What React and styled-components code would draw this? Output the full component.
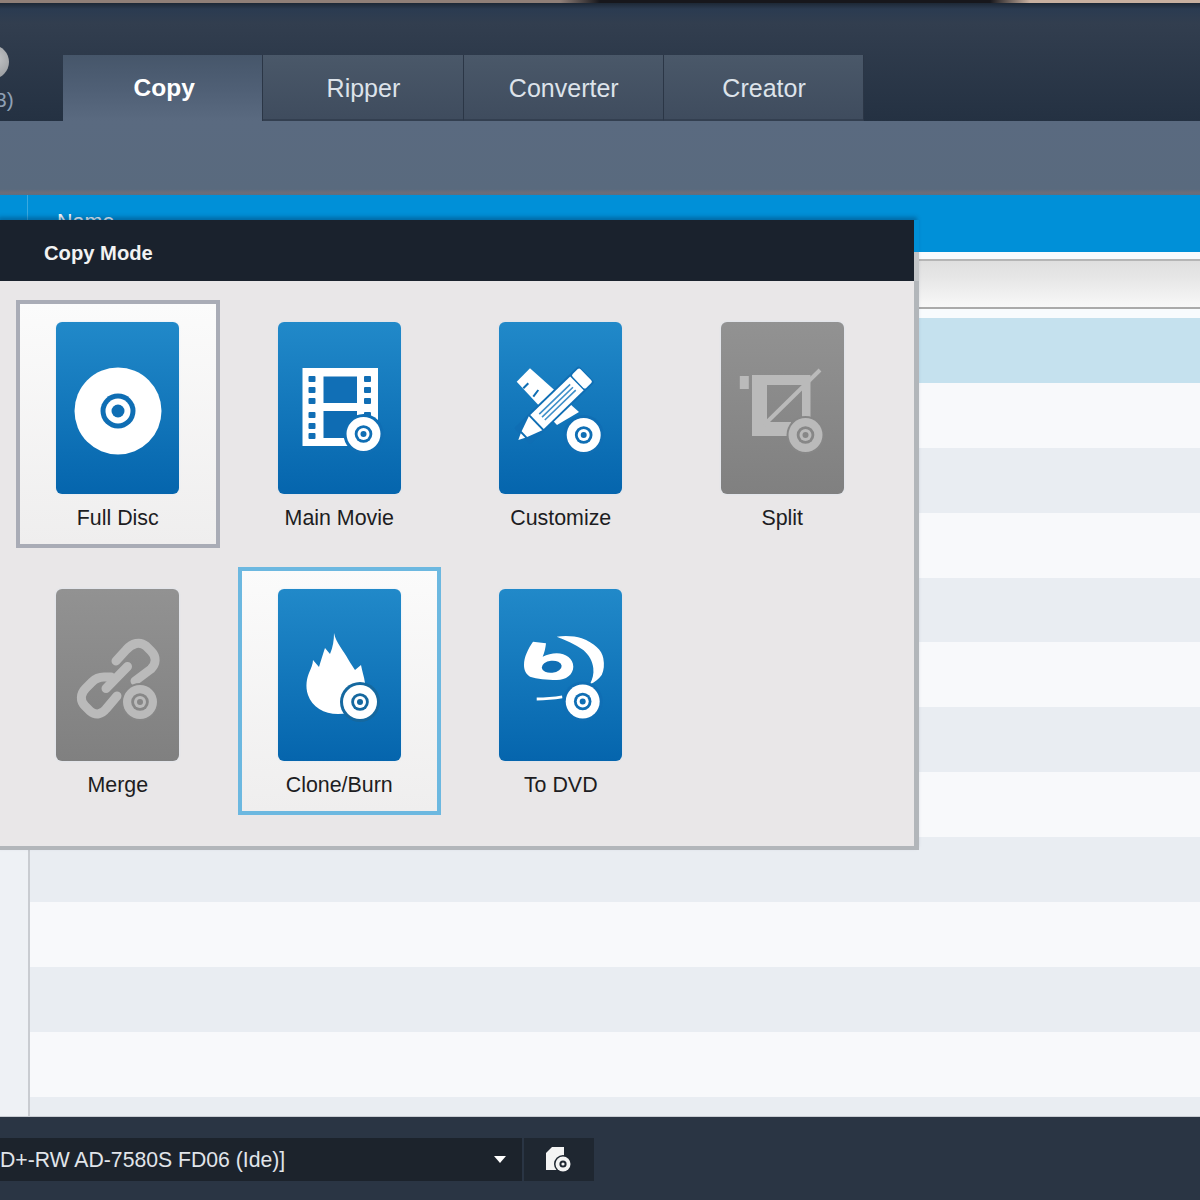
import React from 'react';
import styled, { createGlobalStyle } from 'styled-components';

const GlobalStyle = createGlobalStyle`
  html, body {
    margin: 0;
    padding: 0;
    background: #fff;
    font-family: "Liberation Sans", Arial, sans-serif;
  }
`;

const Page = styled.div`
  position: relative;
  width: 1200px;
  height: 1200px;
  overflow: hidden;
  display: flex;
  flex-direction: column;
`;

const TopStrip = styled.div`
  height: 3px;
  flex: none;
  background: linear-gradient(90deg, #8f7f78 0, #8f7f78 560px, #17171c 600px, #17171c 990px, #c8b0a0 1030px, #c8b0a0 100%);
`;

const Header = styled.header`
  position: relative;
  height: 118px;
  flex: none;
  box-sizing: border-box;
  padding: 52px 0 0 63px;
  background: linear-gradient(180deg, #1d2836 0, #2b3b51 6px, #323e4f 20px, #243142 100%);
`;

const LogoBall = styled.div`
  position: absolute;
  left: -25px;
  top: 42px;
  width: 34px;
  height: 34px;
  border-radius: 50%;
  background: radial-gradient(circle at 60% 40%, #c4c6c8, #8a8d91 95%);
`;

const LogoText = styled.div`
  position: absolute;
  left: -12px;
  top: 85px;
  font-size: 21px;
  color: #8fa0b4;
`;

const Tabs = styled.nav`
  display: flex;
`;

const Tab = styled.div`
  width: 200.3px;
  height: 66px;
  box-sizing: border-box;
  display: flex;
  align-items: center;
  justify-content: center;
  padding: ${p => (p.$active ? '0 0 0 3px' : '2px 0 0 1px')};
  font-size: ${p => (p.$active ? '24.5px' : '25px')};
  font-weight: ${p => (p.$active ? 700 : 400)};
  color: ${p => (p.$active ? '#fff' : '#dde3ea')};
  background: ${p => (p.$active
    ? 'linear-gradient(180deg, #46566a 0, #4f5f75 50%, #5a6a80 100%)'
    : 'linear-gradient(180deg, #4a5869 0, #3f4c5e 100%)')};
  border-right: 1px solid #2b3646;
  border-bottom: ${p => (p.$active ? 'none' : '2px solid #333f50')};
`;

const SubBar = styled.div`
  height: 74px;
  flex: none;
  background: linear-gradient(180deg, #5a6a80 0, #596a7e 92%, #6d6d78 97%, #5d6f82 100%);
`;

const TableHead = styled.div`
  height: 57px;
  flex: none;
  display: flex;
  background: #0090d8;
  color: #fff;
  font-size: 21.5px;
`;

const CheckHead = styled.div`
  width: 27px;
  flex: none;
  border-right: 1px solid #3aa9e0;
`;

const NameHead = styled.div`
  padding: 15px 0 0 29px;
`;

const SortRow = styled.div`
  height: 66px;
  flex: none;
  box-sizing: border-box;
  padding: 7px 0 9px;
  background: #f8fbfd;
`;

const SortInner = styled.div`
  height: 100%;
  box-sizing: border-box;
  border-top: 2px solid #b5b5b5;
  border-bottom: 2px solid #aaa;
  background: linear-gradient(180deg, #dfdfdf 0, #e6e6e6 35%, #f8f8f8 100%);
`;

const TableBody = styled.div`
  flex: 1;
  display: flex;
  min-height: 0;
  overflow: hidden;
`;

const SideColumn = styled.div`
  width: 28px;
  flex: none;
  background: #eef1f5;
  border-right: 2px solid #c9ccd1;
`;

const Rows = styled.div`
  flex: 1;
`;

const Row = styled.div`
  height: 64.9px;
  background: ${p => (p.$selected ? '#c5e1ee' : p.$odd ? '#e9edf2' : '#f8f9fb')};
`;

const Footer = styled.footer`
  height: 84px;
  flex: none;
  box-sizing: border-box;
  display: flex;
  padding-top: 21px;
  background: #2a3544;
  border-top: 1px solid #c8ccd2;
`;

const DriveSelect = styled.div`
  width: 522px;
  height: 43px;
  box-sizing: border-box;
  display: flex;
  align-items: center;
  justify-content: space-between;
  padding-right: 16px;
  background: #1c232c;
  color: #e1e5ea;
  font-size: 21.2px;
  white-space: nowrap;
`;

const Arrow = styled.span`
  width: 0;
  height: 0;
  border-left: 6.5px solid transparent;
  border-right: 6.5px solid transparent;
  border-top: 7px solid #fff;
`;

const DriveButton = styled.div`
  width: 70px;
  height: 43px;
  margin-left: 2px;
  display: flex;
  align-items: center;
  justify-content: center;
  padding-right: 2px;
  box-sizing: border-box;
  background: #1f2731;
`;

const Dialog = styled.section`
  position: absolute;
  left: 0;
  top: 220px;
  width: 919px;
  box-shadow: -2px -3px 4px rgba(0, 40, 80, 0.35);

  &::after {
    content: '';
    position: absolute;
    right: 0;
    top: 32px;
    width: 5px;
    height: 29px;
    background: #c2c5c8;
  }
`;

const DialogTitle = styled.h2`
  margin: 0;
  width: 914px;
  height: 61px;
  box-sizing: border-box;
  padding: 5px 0 0 44px;
  display: flex;
  align-items: center;
  background: #1a222d;
  color: #f2f2f2;
  font-size: 20.2px;
  font-weight: 700;
`;

const DialogBody = styled.div`
  box-sizing: border-box;
  padding: 19px 0 31px 16px;
  display: grid;
  grid-template-columns: repeat(4, 203.5px);
  column-gap: 18px;
  row-gap: 19px;
  background: #e9e7e8;
  border-right: 5px solid #b2b6ba;
  border-bottom: 4px solid #b2b6ba;
`;

const modeBorders = { selected: '#a9acb6', hover: '#6cb8e0' };

const ModeCard = styled.div`
  height: 248px;
  box-sizing: border-box;
  padding-top: 18px;
  display: flex;
  flex-direction: column;
  align-items: center;
  border: 4px solid ${p => modeBorders[p.$state] || 'transparent'};
  background: ${p => (p.$state ? 'linear-gradient(180deg, #fbfbfb 0, #efeeee 100%)' : 'transparent')};
`;

const Tile = styled.div`
  width: 123px;
  height: 172px;
  flex: none;
  border-radius: 6px;
  background: ${p => (p.$disabled
    ? 'linear-gradient(180deg, #929292 0, #808080 100%)'
    : 'linear-gradient(180deg, #2189c9 0, #0565ad 100%)')};
  box-shadow: 0 0 2px rgba(200, 225, 245, 0.6);

  svg {
    display: block;
  }
`;

const ModeLabel = styled.div`
  margin-top: 12px;
  font-size: 21.4px;
  line-height: 24px;
  color: #1d1d22;
  white-space: nowrap;
`;

const BLUE = '#0f6eb4';
const WHITE = '#fff';
const GRAY = '#bababa';
const GRAY_BG = '#878787';

const Badge = ({ x = 85, y = 113, fg = WHITE, bg = BLUE, outline = 3 }) => (
  <g>
    <circle cx={x} cy={y} r={17 + outline} fill={bg} />
    <circle cx={x} cy={y} r="17" fill={fg} />
    <circle cx={x} cy={y} r="8.8" fill={bg} />
    <circle cx={x} cy={y} r="6" fill={fg} />
    <circle cx={x} cy={y} r="3" fill={bg} />
  </g>
);

const FullDiscIcon = () => (
  <svg width="123" height="172" viewBox="0 0 123 172">
    <circle cx="62" cy="89" r="43.5" fill={WHITE} />
    <circle cx="62" cy="89" r="17.5" fill={BLUE} />
    <circle cx="62" cy="89" r="12.5" fill={WHITE} />
    <circle cx="62" cy="89" r="6.5" fill={BLUE} />
  </svg>
);

const filmHoles = [54, 65, 76, 90, 101, 111];
const MainMovieIcon = () => (
  <svg width="123" height="172" viewBox="0 0 123 172">
    <rect x="24.5" y="46" width="75.5" height="78" fill={WHITE} />
    <rect x="45.5" y="54.5" width="33.5" height="26.5" fill="#116fb6" />
    <rect x="45.5" y="89" width="33.5" height="27" fill="#0f6cb3" />
    {filmHoles.map(y => <rect key={y} x="30.5" y={y} width="7" height="6" rx="1" fill="#106eb5" />)}
    {filmHoles.map(y => <rect key={y} x="86" y={y} width="7" height="6" rx="1" fill="#106eb5" />)}
    <Badge x={85.5} y={112} />
  </svg>
);

const CustomizeIcon = () => (
  <svg width="123" height="172" viewBox="0 0 123 172">
    <path d="M17.7 59.7 L31 46.3 L80 90 L58 103 Z" fill={WHITE} />
    <path d="M24.3 66.3 L29.3 61.3 M34.3 74.7 L39.3 68" stroke={BLUE} strokeWidth="2" fill="none" />
    <g transform="translate(19.3 118) rotate(-44)">
      <rect x="5" y="-11.5" width="90" height="23" rx="2" fill={BLUE} />
      <path d="M0 0 L6.5 -3.2 L6.5 3.2 Z" fill={WHITE} />
      <path d="M8.5 -4 L24 -9.7 L24 9.7 L8.5 4 Z" fill={WHITE} />
      <rect x="26" y="-9.7" width="55.5" height="19.4" fill={WHITE} />
      <rect x="83" y="-9.7" width="11" height="19.4" rx="2" fill={WHITE} />
      <path d="M33 -4 H76 M33 0 H76 M33 4 H76" stroke="#3f8fc9" strokeWidth="1.6" fill="none" />
    </g>
    <Badge x={84.7} y={113} />
  </svg>
);

const SplitIcon = () => (
  <svg width="123" height="172" viewBox="0 0 123 172">
    <rect x="18.8" y="54" width="9" height="13" fill={GRAY} />
    <path d="M31 53 H89.5 V95 H81 V63 H46 V100 H70 V114 H31 Z" fill={GRAY} />
    <path d="M43 103 L99 48" stroke={GRAY} strokeWidth="4" fill="none" />
    <Badge x={84.5} y={113} fg={GRAY} bg={GRAY_BG} outline={2} />
  </svg>
);

const MergeIcon = () => (
  <svg width="123" height="172" viewBox="0 0 123 172">
    <g stroke={GRAY} strokeWidth="9" fill="none" strokeLinecap="round" strokeLinejoin="round">
      <path d="M60 72 L70 61 C76 54 84 52 90 57 L95 62 C101 68 100 75 95 80 L79 92" />
      <path d="M55 88 L48 88 C43 88 39 90 36 93 L30 99 C24 105 24 112 29 117 L34 122 C40 127 46 125 50 120 L61 107" />
      <path d="M50 99.5 L71.5 77.5" />
    </g>
    <Badge x={84} y={113} fg={GRAY} bg={GRAY_BG} outline={2} />
  </svg>
);

const CloneBurnIcon = () => (
  <svg width="123" height="172" viewBox="0 0 123 172">
    <path
      d="M56 44 C58 54 66 62 70 70 C73 75 75 78 77 81 L83 76 C84 82 86 87 87 94 L80 124 L60 125
         C46 125 34 118 30 106 C27 97 29 89 31 84 C33 79 35 75 35 71 L41 78 C43 71 45 65 47 59 L52 65 C55 58 56 51 56 44 Z"
      fill={WHITE}
    />
    <Badge x={82} y={113} bg="#15689f" />
  </svg>
);

const ToDvdIcon = () => (
  <svg width="123" height="172" viewBox="0 0 123 172">
    <path
      d="M34 52.7 L47 54.3 C46.5 59 45.5 63.5 43.7 67.7 C48 65.5 53 64.3 57.7 64.3
         C67 64.3 74.3 70 74.3 77.7 C74.3 85.5 67 91 57.7 91 C48 91 38 90 31 87.7 C26.5 85 25 80.5 25 76
         C25 68 29 60 34 52.7 Z"
      fill={WHITE}
    />
    <ellipse cx="52.7" cy="77.7" rx="10" ry="6" transform="rotate(-6 52.7 77.7)" fill={BLUE} />
    <path d="M57.7 47.7 C66 46.5 76 47 82.7 49.3 C95 54 103 61 104.3 69.3 C105.5 76 105 81 102.7 86 C100 90 96 93 91 95.3 C93.5 90 95 85 94.3 79.3 C93.5 72 90 66 84.3 61 C76 55 67 51 57.7 47.7 Z" fill={WHITE} />
    <path d="M37.7 108.6 C46 108.5 55 107.8 63 106.4 L63.4 109.2 C55 110.6 46 111.4 37.7 111.4 Z" fill={WHITE} />
    <Badge x={83.7} y={112.5} />
  </svg>
);

const DriveIcon = () => (
  <svg width="27" height="27" viewBox="0 0 27 27">
    <path d="M7 1 H19 V24 H1 V7 Z" fill="#f4f4f4" />
    <circle cx="18" cy="18" r="9" fill="#1f2731" />
    <circle cx="18" cy="18" r="7.5" fill="#f4f4f4" />
    <circle cx="18" cy="18" r="3.6" fill="#1f2731" />
    <circle cx="18" cy="18" r="1.6" fill="#f4f4f4" />
  </svg>
);

const TAB_NAMES = ['Copy', 'Ripper', 'Converter', 'Creator'];

const MODES = [
  { label: 'Full Disc', Icon: FullDiscIcon, state: 'selected' },
  { label: 'Main Movie', Icon: MainMovieIcon },
  { label: 'Customize', Icon: CustomizeIcon },
  { label: 'Split', Icon: SplitIcon, disabled: true },
  { label: 'Merge', Icon: MergeIcon, disabled: true },
  { label: 'Clone/Burn', Icon: CloneBurnIcon, state: 'hover' },
  { label: 'To DVD', Icon: ToDvdIcon },
];

const ROW_COUNT = 13;

export default function App() {
  return (
    <Page>
      <GlobalStyle />
      <TopStrip />
      <Header>
        <LogoBall />
        <LogoText>(3)</LogoText>
        <Tabs>
          {TAB_NAMES.map((name, i) => (
            <Tab key={name} $active={i === 0}>{name}</Tab>
          ))}
        </Tabs>
      </Header>
      <SubBar />
      <TableHead>
        <CheckHead />
        <NameHead>Name</NameHead>
      </TableHead>
      <SortRow>
        <SortInner />
      </SortRow>
      <TableBody>
        <SideColumn />
        <Rows>
          {Array.from({ length: ROW_COUNT }, (_, i) => (
            <Row key={i} $selected={i === 0} $odd={i % 2 === 0} />
          ))}
        </Rows>
      </TableBody>
      <Footer>
        <DriveSelect>
          <span>D+-RW AD-7580S FD06 (Ide)]</span>
          <Arrow />
        </DriveSelect>
        <DriveButton>
          <DriveIcon />
        </DriveButton>
      </Footer>
      <Dialog>
        <DialogTitle>Copy Mode</DialogTitle>
        <DialogBody>
          {MODES.map(({ label, Icon, state, disabled }) => (
            <ModeCard key={label} $state={state}>
              <Tile $disabled={disabled}>
                <Icon />
              </Tile>
              <ModeLabel>{label}</ModeLabel>
            </ModeCard>
          ))}
        </DialogBody>
      </Dialog>
    </Page>
  );
}
